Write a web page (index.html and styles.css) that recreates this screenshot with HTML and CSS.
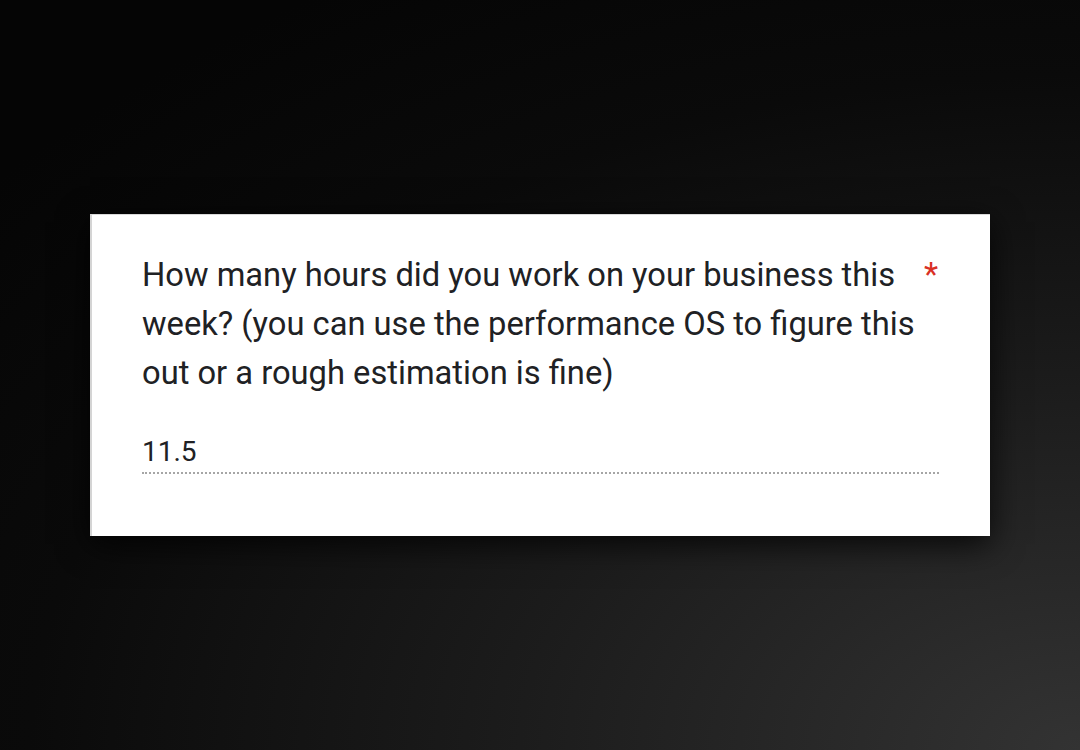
FILE: index.html
```html
<!DOCTYPE html>
<html>
<head>
<meta charset="utf-8">
<link rel="stylesheet" href="styles.css">
</head>
<body>
<div class="stage">
  <div class="card">
    <div class="question">
      <div class="qtext">How many hours did you work on your business this week? (you can use the performance OS to figure this out or a rough estimation is fine)</div>
      <div class="req">*</div>
    </div>
    <div class="answer">11.5</div>
  </div>
</div>
</body>
</html>
```
FILE: styles.css
```css
html, body {
  margin: 0;
  padding: 0;
  width: 1080px;
  height: 750px;
  overflow: hidden;
}
.stage {
  width: 1080px;
  height: 750px;
  background: radial-gradient(ellipse 1400px 900px at 100% 100%, #333333 0%, #1c1c1c 40%, #0a0a0a 75%, #050505 100%);
  display: flex;
  align-items: flex-start;
  padding-top: 214px;
  padding-left: 90px;
  box-sizing: border-box;
  font-family: Roboto, "Noto Sans", sans-serif;
}
.card {
  width: 900px;
  height: 322px;
  box-sizing: border-box;
  background: #ffffff;
  border-top: 1px solid #d9d9d9;
  border-left: 2px solid #d4d4d4;
  box-shadow: 0 8px 30px rgba(0,0,0,0.8);
  padding: 36px 51px 0 50px;
}
.question {
  display: flex;
  align-items: flex-start;
  justify-content: space-between;
}
.qtext {
  width: 780px;
  font-size: 32.7px;
  line-height: 49px;
  color: #202124;
}
.req {
  color: #d93025;
  font-size: 32.7px;
  line-height: 49px;
  margin-right: 1px;
}
.answer {
  margin-top: 36px;
  font-size: 28px;
  line-height: 36px;
  color: #202124;
  padding-bottom: 2px;
  border-bottom: 2px dotted #a6a6a6;
}
```
